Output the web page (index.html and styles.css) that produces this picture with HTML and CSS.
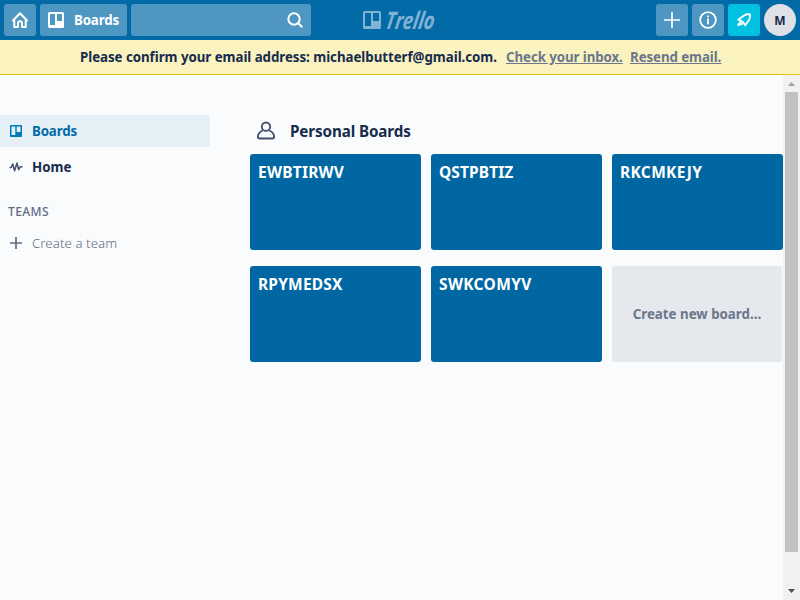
FILE: index.html
```html
<!DOCTYPE html>
<html lang="en">
<head>
<meta charset="utf-8">
<title>Boards | Trello</title>
<link rel="stylesheet" href="styles.css">
</head>
<body>
<header class="header">
  <div class="group">
    <a class="btn square"><svg width="24" height="24" viewBox="0 0 24 24" fill="none" stroke="#fff" stroke-width="2" stroke-linejoin="round" stroke-linecap="round"><path d="M5 12.5L12 5.2L19 12.5M6.300 12V19H10V15.500Q10 13.300 12 13.300T14 15.500V19H17.700V12"/></svg></a>
    <a class="btn boards"><svg width="16" height="16" viewBox="0 0 16 16"><path fill="#fff" fill-rule="evenodd" d="M1.500 0H14.500Q16 0 16 1.500V14.500Q16 16 14.500 16H1.500Q0 16 0 14.500V1.500Q0 0 1.500 0ZM2 2V13H7V2ZM9 2V9H14V2Z"/></svg><span class="boards-label">Boards</span></a>
    <div class="btn search"><svg width="16" height="16" viewBox="0 0 16 16" fill="none" stroke="#fff" stroke-width="2"><circle cx="7" cy="7" r="5.700"/><path d="M11 11L15.300 15.300"/></svg></div>
  </div>
  <div class="logo">
    <svg width="18" height="18" viewBox="0 0 18 18"><path fill="#80b3d3" fill-rule="evenodd" d="M1.500 0H16.500Q18 0 18 1.500V16.500Q18 18 16.500 18H1.500Q0 18 0 16.500V1.500Q0 0 1.500 0ZM2 2V15H8V2ZM10 2V10H16V2Z"/></svg>
    <span class="wordmark">Trello</span>
  </div>
  <div class="group">
    <a class="btn square"><svg width="16" height="16" viewBox="0 0 16 16" stroke="#fff" stroke-width="1.700"><path d="M0 8H16M8 0V16"/></svg></a>
    <a class="btn square"><svg width="18" height="18" viewBox="0 0 18 18" fill="none" stroke="#fff" stroke-width="1.800"><circle cx="9" cy="9" r="7.800"/><path d="M9 7.500V13.300M9 4.500V6.200"/></svg></a>
    <a class="btn square rocket"><svg width="16" height="16" viewBox="0 0 16 16" fill="none" stroke="#fff" stroke-width="1.900" stroke-linejoin="round"><path d="M2.200 7.700L8 3.500Q10.500 1.900 13.900 2.300Q14.500 5.500 13 8L9.100 13.300L6.800 9.800ZM4.500 9.500L2.200 13L6.500 11.500"/></svg></a>
    <a class="avatar">M</a>
  </div>
</header>
<div class="banner"><span class="confirm">Please confirm your email address: michaelbutterf@gmail.com.</span><a class="check">Check your inbox.</a><a class="resend">Resend email.</a></div>
<div class="viewport">
  <nav class="sidebar">
    <a class="nav-item active"><svg width="12" height="12" viewBox="0 0 12 12"><path fill="#0079bf" fill-rule="evenodd" d="M1 0H11Q12 0 12 1V11Q12 12 11 12H1Q0 12 0 11V1Q0 0 1 0ZM1.500 1.500V10H5.300V1.500ZM6.700 1.500V7H10.500V1.500Z"/></svg><span class="nav-boards">Boards</span></a>
    <a class="nav-item"><svg width="14" height="12" viewBox="0 0 14 12" fill="none" stroke="#42526e" stroke-width="1.500" stroke-linejoin="round"><path d="M0.500 6.500H2.200L3.700 3L5.600 9.700L8 2L9.600 8.500L11.300 5.800H13.500"/></svg><span class="nav-home">Home</span></a>
    <h2 class="teams">TEAMS</h2>
    <a class="create-team"><svg width="12" height="12" viewBox="0 0 12 12" stroke="#5e6c84" stroke-width="1.700"><path d="M0 6H12M6 0V12"/></svg><span class="team-label">Create a team</span></a>
  </nav>
  <main class="content">
    <div class="section-head"><svg width="20" height="20" viewBox="0 0 20 20" fill="none" stroke="#42526e" stroke-width="1.900"><circle cx="10" cy="5.700" r="4.200"/><path d="M6.700 9.500Q2 11.500 1.900 15.800Q1.900 17.500 3.500 17.500H16.500Q18.100 17.500 18.100 15.800Q18 11.500 13.300 9.500"/></svg><h1 class="section-title">Personal Boards</h1></div>
    <div class="grid">
      <a class="tile"><span class="t1">EWBTIRWV</span></a>
      <a class="tile"><span class="t2">QSTPBTIZ</span></a>
      <a class="tile"><span class="t3">RKCMKEJY</span></a>
      <a class="tile"><span class="t4">RPYMEDSX</span></a>
      <a class="tile"><span class="t5">SWKCOMYV</span></a>
      <a class="tile new"><span class="new-label">Create new board…</span></a>
    </div>
  </main>
  <div class="scrollbar">
    <svg width="17" height="17" viewBox="0 0 17 17"><path fill="#a3a3a3" d="M5 11H12L8.500 7Z"/></svg>
    <div class="thumb"></div>
    <svg width="17" height="17" viewBox="0 0 17 17"><path fill="#505050" d="M5 6H12L8.500 10Z"/></svg>
  </div>
</div>
</body>
</html>
```
FILE: styles.css
```css
* { box-sizing: border-box; }
body {
  margin: 0;
  width: 800px;
  height: 600px;
  overflow: hidden;
  background: #fafbfc;
  color: #172b4d;
  font: 13.3px/20px "Noto Sans", "Open Sans", sans-serif;
  display: flex;
  flex-direction: column;
}
svg { display: block; flex: none; }
span { white-space: nowrap; }
.header {
  height: 40px;
  flex: none;
  background: #026aa7;
  padding: 4px;
  display: flex;
  justify-content: space-between;
}
.group { display: flex; gap: 4px; }
.btn {
  height: 32px;
  border-radius: 3px;
  background: #4e97c2;
  display: flex;
  align-items: center;
}
.square { width: 32px; justify-content: center; }
.boards {
  width: 87px;
  padding-left: 8px;
  gap: 10px;
  color: #fff;
  font-weight: 700;
}
.boards-label, .nav-boards { letter-spacing: -0.15px; }
.search { width: 180px; justify-content: flex-end; padding-right: 8px; }
.rocket { background: #00c2e0; }
.avatar {
  width: 32px;
  height: 32px;
  border-radius: 50%;
  background: #dfe1e6;
  font-size: 12px;
  line-height: 33px;
  font-weight: 700;
  text-align: center;
}
.logo {
  display: flex;
  align-items: center;
  gap: 4px;
  width: 76px;
  margin-right: 166px;
  color: #80b3d3;
}
.wordmark {
  font: italic 700 24px/30px "Open Sans", sans-serif;
  transform: scaleX(.76) skewX(-12deg);
  transform-origin: 0 70%;
}
.banner {
  height: 35px;
  flex: none;
  background: #faf3c0;
  border-bottom: 1px solid #e6c60d;
  padding-left: 80px;
  display: flex;
  line-height: 34px;
  font-weight: 700;
  white-space: nowrap;
}
.confirm { width: 426px; letter-spacing: -0.04px; }
.check, .resend { color: #6b778c; text-decoration: underline; letter-spacing: -0.08px; }
.check { width: 124px; }
.viewport { flex: 1; display: flex; min-height: 0; }
.sidebar { width: 210px; padding-top: 40px; flex: none; }
.nav-item {
  height: 32px;
  margin-bottom: 4px;
  padding-left: 10px;
  display: flex;
  align-items: center;
  gap: 10px;
  font-weight: 700;
  border-radius: 3px;
}
.nav-item:nth-child(2) { padding-left: 9px; gap: 9px; }
.active { background: #e4f0f6; color: #0079bf; border-radius: 0 3px 3px 0; }
.nav-boards { color: #026aa7; }
.teams {
  margin: 0;
  padding: 15px 0 0 8px;
  height: 40px;
  font-size: 12px;
  font-weight: 500;
  letter-spacing: 0.4px;
  color: #5e6c84;
}
.create-team {
  height: 32px;
  padding-left: 10px;
  display: flex;
  gap: 10px;
  align-items: center;
  color: #5e6c84;
}
.team-label { font-weight: 300; letter-spacing: 0.05px; }
.content { width: 533px; margin-left: 40px; padding-top: 40px; flex: none; }
.section-head { height: 39px; display: flex; padding-left: 6px; gap: 14px; }
.section-head svg { margin-top: 6px; }
.section-title { margin: 0; font-size: 15.2px; line-height: 33px; letter-spacing: -0.1px; white-space: nowrap; }
.grid { display: grid; grid-template-columns: 171px 171px 171px; gap: 16px 10px; }
.tile {
  height: 96px;
  border-radius: 3px;
  background: #0067a3;
  color: #fff;
  padding: 8px;
  font-size: 15.5px;
  font-weight: 700;
}
.t1 { letter-spacing: 0.25px; }
.t2 { letter-spacing: 0.1px; }
.t3 { letter-spacing: 0.35px; }
.t4 { letter-spacing: 0.2px; }
.t5 { letter-spacing: 0.35px; }
.new {
  width: 170px;
  background: #e5e8ed;
  color: #6b778c;
  font-size: 13.3px;
  display: flex;
  align-items: center;
  justify-content: center;
}
.scrollbar { width: 17px; background: #f1f1f1; flex: none; display: flex; flex-direction: column; }
.thumb { width: 13px; height: 460px; margin: 0 2px 31px; background: #c1c1c1; flex: none; }
```
